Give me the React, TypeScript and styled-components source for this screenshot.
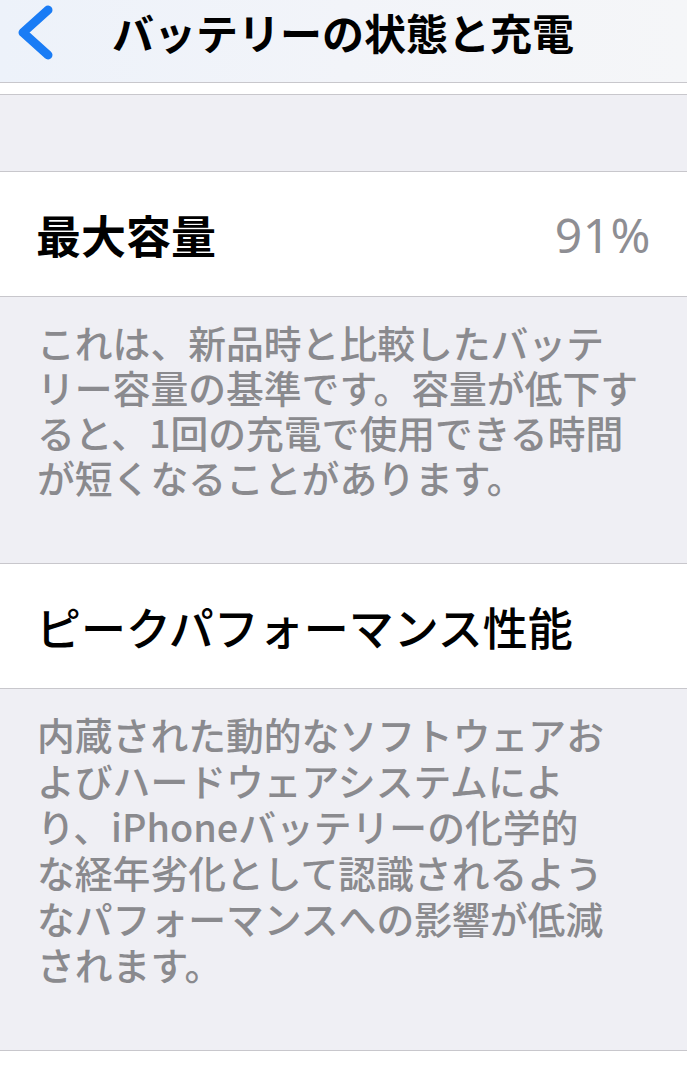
import React from 'react'
import styled, { createGlobalStyle } from 'styled-components'

const colors = {
  groupBg: '#efeff4',
  separator: '#c8c7cc',
  footerText: '#8a8a8e',
  detail: '#8e8e93',
  tint: '#1a7cf5',
}

const jp = `"Noto Sans CJK JP", "Noto Sans", sans-serif`

const GlobalStyle = createGlobalStyle`
  html, body {
    margin: 0;
    padding: 0;
    background: #fff;
  }
  body {
    font-family: ${jp};
    -webkit-font-smoothing: antialiased;
  }
`

const Page = styled.div`
  width: 687px;
  min-height: 1080px;
  display: flex;
  flex-direction: column;
  background: #fff;
`

const NavBar = styled.header`
  height: 82px;
  display: flex;
  align-items: flex-start;
  padding-left: 14px;
  background: linear-gradient(90deg, #edf2fa 0%, #f2f4f9 50%, #f5f6f8 100%);
  border-bottom: 1px solid ${colors.separator};
`

const BackIcon = styled.svg`
  flex: none;
  width: 44px;
  height: 64px;
`

const NavTitle = styled.h1`
  margin: 0 0 0 54px;
  font-family: ${jp};
  font-size: 42px;
  font-weight: 700;
  line-height: 64px;
  color: #000;
  white-space: nowrap;
`

const Strip = styled.div`
  height: 11px;
  background: #fff;
  border-bottom: 1px solid ${colors.separator};
`

const GroupGap = styled.div`
  height: 76px;
  background: ${colors.groupBg};
  border-bottom: 1px solid ${colors.separator};
`

const Cell = styled.div`
  height: 124px;
  display: flex;
  align-items: center;
  justify-content: space-between;
  padding: 0 37px 0 36px;
  background: #fff;
  border-bottom: 1px solid ${colors.separator};
`

const CellLabel = styled.span<{ $weight: number }>`
  font-family: ${jp};
  font-size: 45px;
  font-weight: ${(p) => p.$weight};
  color: #000;
  white-space: nowrap;
`

const CellValue = styled.span`
  font-family: "Noto Sans", sans-serif;
  font-size: 48px;
  font-weight: 400;
  letter-spacing: 0.5px;
  color: ${colors.detail};
  margin-right: -1px;
`

const Footer = styled.div<{ $bottom: number }>`
  padding: 22px 37px ${(p) => p.$bottom}px;
  background: ${colors.groupBg};
  border-bottom: 1px solid ${colors.separator};
`

const FooterLine = styled.span<{ $lh: number }>`
  display: block;
  font-family: ${jp};
  font-size: 37.8px;
  font-weight: 500;
  line-height: ${(p) => p.$lh}px;
  color: ${colors.footerText};
  white-space: nowrap;
`

const capacityNote = [
  'これは、新品時と比較したバッテ',
  'リー容量の基準です。容量が低下す',
  'ると、1回の充電で使用できる時間',
  'が短くなることがあります。',
]

const peakNote = [
  '内蔵された動的なソフトウェアお',
  'よびハードウェアシステムによ',
  'り、iPhoneバッテリーの化学的',
  'な経年劣化として認識されるよう',
  'なパフォーマンスへの影響が低減',
  'されます。',
]

const App: React.FC = () => {
  return (
    <Page>
      <GlobalStyle />
      <NavBar>
        <BackIcon viewBox="0 0 44 64">
          <path
            d="M34 10 L9 32.5 L34 55"
            fill="none"
            stroke={colors.tint}
            strokeWidth={9}
            strokeLinecap="round"
            strokeLinejoin="round"
          />
        </BackIcon>
        <NavTitle>バッテリーの状態と充電</NavTitle>
      </NavBar>
      <Strip />
      <GroupGap />

      <Cell>
        <CellLabel $weight={700}>最大容量</CellLabel>
        <CellValue>91%</CellValue>
      </Cell>
      <Footer $bottom={64}>
        {capacityNote.map((line) => (
          <FooterLine key={line} $lh={45}>
            {line}
          </FooterLine>
        ))}
      </Footer>

      <Cell>
        <CellLabel $weight={500}>ピークパフォーマンス性能</CellLabel>
      </Cell>
      <Footer $bottom={63}>
        {peakNote.map((line) => (
          <FooterLine key={line} $lh={46}>
            {line}
          </FooterLine>
        ))}
      </Footer>
    </Page>
  )
}

export default App
